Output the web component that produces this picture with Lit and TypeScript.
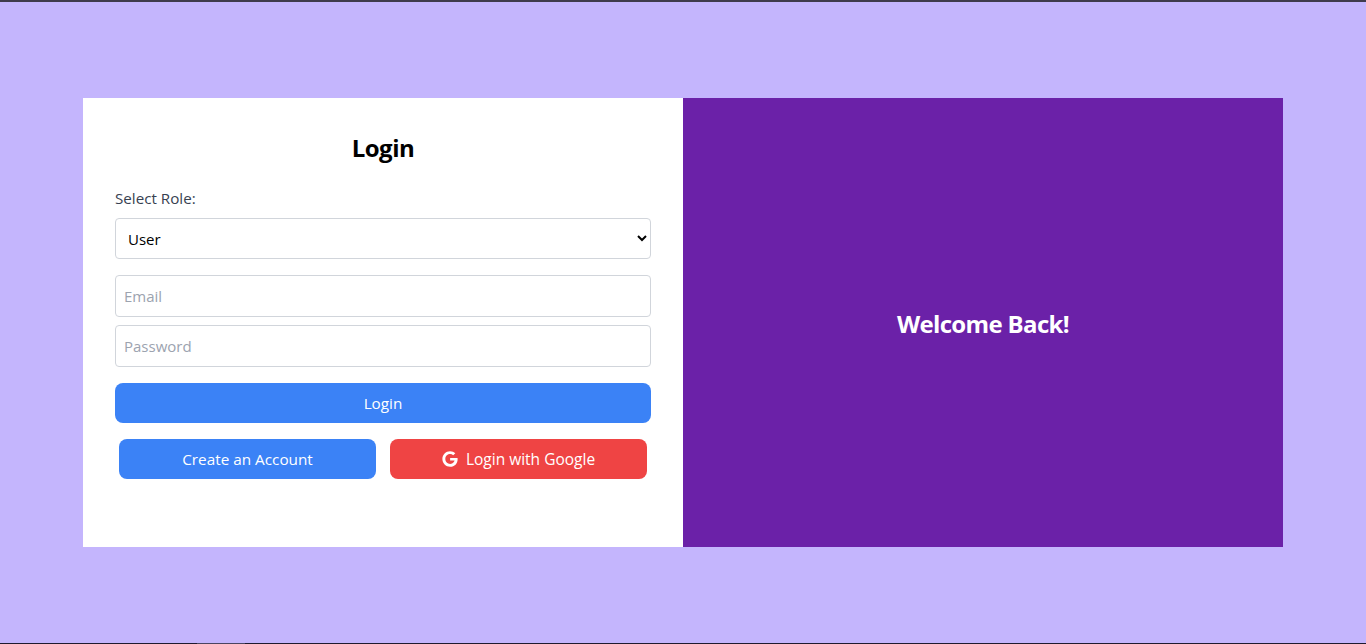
import { LitElement, html, css } from "lit";
import { customElement } from "lit/decorators.js";

@customElement("app-root")
export class AppRoot extends LitElement {
  static styles = css`
    :host {
      display: block;
      height: 644px;
      font-family: "Open Sans", "Noto Sans", sans-serif;
      font-size: 16px;
    }
    * { box-sizing: border-box; }
    .page {
      height: 644px;
      background: #c4b5fd;
      border-top: 2px solid #3f3b4c;
      border-bottom: 1px solid #1e1a2e;
      display: flex;
      align-items: center;
      justify-content: center;
      position: relative;
    }
    .taskmark {
      position: absolute;
      left: 197px;
      bottom: -1px;
      width: 48px;
      height: 1px;
      background: #4a4560;
    }
    .card {
      width: 1200px;
      height: 449px;
      display: flex;
    }
    .left {
      flex: 0 0 50%;
      background: #fff;
      padding: 32px;
      display: flex;
      flex-direction: column;
    }
    .right {
      flex: 0 0 50%;
      background: #6b21a8;
      color: #fff;
      display: flex;
      align-items: center;
      justify-content: center;
    }
    h2 {
      margin: 0 0 20px;
      font-size: 24px;
      line-height: 36px;
      font-weight: 700;
      text-align: center;
      color: #000;
      letter-spacing: -0.5px;
    }
    .right h2 {
      margin: 2px 0 0;
      color: #fff;
      letter-spacing: -0.65px;
    }
    label {
      display: block;
      line-height: 24px;
      margin-bottom: 8px;
      color: #374151;
      font-size: 15.2px;
    }
    select {
      width: 100%;
      height: 41px;
      margin-bottom: 16px;
      padding: 8px;
      border: 1px solid #d1d5db;
      border-radius: 4px;
      background: #fff;
      color: #000;
      font: inherit;
      font-size: 15px;
    }
    input {
      display: block;
      width: 100%;
      height: 42px;
      margin-bottom: 8px;
      padding: 8px;
      border: 1px solid #d1d5db;
      border-radius: 4px;
      font: inherit;
      font-size: 15px;
    }
    input::placeholder { color: #9ca3af; opacity: 1; }
    input.last { margin-bottom: 16px; }
    button {
      height: 40px;
      border: 0;
      border-radius: 8px;
      color: #fff;
      font: inherit;
      font-size: 15.3px;
      display: flex;
      align-items: center;
      justify-content: center;
      gap: 8px;
      padding: 0;
    }
    .blue { background: #3b82f6; }
    .red { background: #ef4444; font-size: 15.5px; }
    .row {
      display: flex;
      gap: 14px;
      margin-top: 16px;
      padding: 0 4px;
    }
    .row button { flex: 1 1 0; min-width: 0; }
    svg { width: 16px; height: 16px; fill: currentColor; display: block; }
  `;

  render() {
    return html`
      <div class="page">
        <div class="card">
          <div class="left">
            <h2>Login</h2>
            <label for="role">Select Role:</label>
            <select id="role"><option>User</option><option>Admin</option></select>
            <input type="email" placeholder="Email" />
            <input class="last" type="password" placeholder="Password" />
            <button class="blue">Login</button>
            <div class="row">
              <button class="blue">Create an Account</button>
              <button class="red">
                <svg viewBox="0 0 488 512"><path d="M488 261.8C488 403.3 391.1 504 248 504 110.8 504 0 393.2 0 256S110.8 8 248 8c66.8 0 123 24.5 166.3 64.9l-67.5 64.9C258.5 52.6 94.3 116.6 94.3 256c0 86.5 69.1 156.6 153.7 156.6 98.2 0 135-70.4 140.8-106.9H248v-85.3h236.1c2.3 12.7 3.9 24.9 3.9 41.4z"/></svg>
                Login with Google
              </button>
            </div>
          </div>
          <div class="right"><h2>Welcome Back!</h2></div>
        </div>
        <div class="taskmark"></div>
      </div>
    `;
  }
}
